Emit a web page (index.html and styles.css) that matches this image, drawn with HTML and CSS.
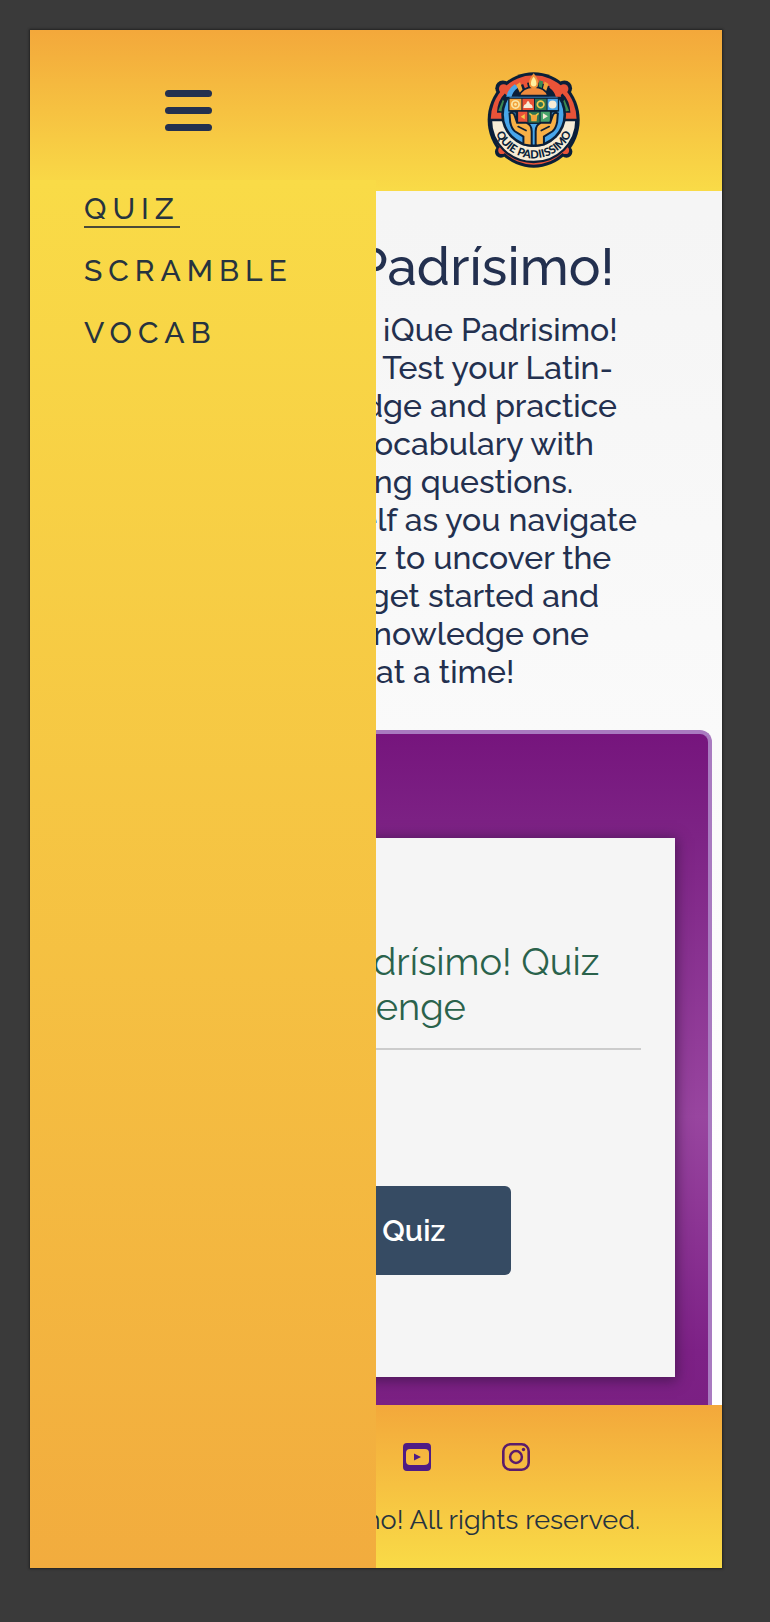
FILE: index.html
```html
<!DOCTYPE html>
<html lang="en">
<head>
<meta charset="utf-8">
<meta name="viewport" content="width=device-width, initial-scale=1">
<title>¡Qué Padrísimo!</title>
<link rel="stylesheet" href="styles.css">
</head>
<body>
<div class="page">
  <header class="header">
    <div class="header-cell">
      <button class="menu-button" type="button" aria-label="Close menu" aria-expanded="true" aria-controls="menu">
        <span class="bar"></span><span class="bar"></span><span class="bar"></span>
      </button>
    </div>
    <div class="header-cell">
      <a class="logo" href="#" aria-label="Home">
        <svg viewBox="50 62 284 296" aria-hidden="true">
          <ellipse cx="191" cy="210" rx="139" ry="144" fill="#0b1f38"/>
          <g fill="#0b1f38"><circle cx="98" cy="114" r="23"/><circle cx="284" cy="114" r="23"/><circle cx="92" cy="306" r="18"/><circle cx="290" cy="306" r="18"/></g>
          <ellipse cx="191" cy="210" rx="130" ry="135" fill="#e95338"/>
          <g fill="#e95338"><circle cx="100" cy="116" r="14"/><circle cx="282" cy="116" r="14"/><circle cx="95" cy="302" r="11"/><circle cx="287" cy="302" r="11"/></g>
          <path d="M62 210A129 127 0 0 0 320 210Z" fill="#f7ecd6" stroke="#0b1f38" stroke-width="7"/>
          <path d="M80 188Q82 150 104 130L116 142Q98 162 96 188ZM302 188Q300 150 278 130L266 142Q284 162 286 188Z" fill="#0b1f38"/>
          <path d="M84 182L98 148L104 158L96 184ZM298 182L284 148L278 158L286 184Z" fill="#3c8a52"/>
          <circle cx="191" cy="194" r="98" fill="#0b1f38"/>
          <circle cx="191" cy="194" r="90" fill="#49a6ea"/>
          <path d="M116 140A92 92 0 0 1 266 140Z" fill="#0b1f38"/>
          <path d="M108 140Q112 116 134 102L144 112Q128 124 124 140Z" fill="#49a6ea"/>
          <path d="M274 140Q270 116 248 102L238 112Q254 124 258 140Z" fill="#e95338"/>
          <path d="M138 104l12-8 8 24-9 7zM224 94l12 7-8 24-10-6z" fill="#f3a43c"/>
          <path d="M156 94l13-5 5 22-9 5z" fill="#e95338"/>
          <path d="M208 90l12 4-5 22-9-5z" fill="#3c8a52"/>
          <path d="M148 136Q156 112 191 110Q226 112 234 136Z" fill="#f08b3c" stroke="#0b1f38" stroke-width="5"/>
          <path d="M191 74Q174 96 182 108Q191 116 200 108Q208 96 191 74Z" fill="#fff0a0" stroke="#f3943b" stroke-width="6"/>
          <path d="M114 142H268V184L246 188V222H136V188L114 184Z" fill="#0b1f38"/>
          <path d="M118 146H154V180H118Z" fill="#f3a43c"/>
          <path d="M157 146H192V180H157Z" fill="#e95338"/>
          <path d="M195 146H230V180H195Z" fill="#2f7450"/>
          <path d="M233 146H264V180H233Z" fill="#49a6ea"/>
          <path d="M144 185H172V218H144Z" fill="#e95338"/>
          <path d="M175 185H209V218H175Z" fill="#2f7450"/>
          <path d="M212 185H240V218H212Z" fill="#49a36b"/>
          <circle cx="136" cy="163" r="11" fill="none" stroke="#fbe7a8" stroke-width="5"/>
          <circle cx="136" cy="163" r="4" fill="#fbe7a8"/>
          <path d="M160 174Q160 164 168 162Q174 144 180 162Q188 164 188 174Z" fill="#f7ecd6"/>
          <circle cx="212" cy="163" r="10" fill="none" stroke="#f3c94a" stroke-width="5"/>
          <circle cx="248" cy="163" r="12" fill="#f7ecd6"/>
          <path d="M164 192V208L152 200Z" fill="#f3c94a"/>
          <path d="M219 190V208L234 199Z" fill="#f7ecd6"/>
          <path d="M182 194H202L200 214H184Z" fill="#f3a43c"/>
          <path d="M178 190l8 6M206 190l-8 6" stroke="#f3c94a" stroke-width="4"/>
          <path d="M118 190Q130 184 134 198L141 218H168Q185 224 185 244V288L160 284V260L134 244Q124 236 120 216Z" fill="#f8b046" stroke="#0b1f38" stroke-width="6"/>
          <path d="M264 190Q252 184 248 198L241 218H214Q197 224 197 244V288L222 284V260L248 244Q258 236 262 216Z" fill="#f8b046" stroke="#0b1f38" stroke-width="6"/>
          <path d="M144 230L168 242M238 230L214 242" stroke="#0b1f38" stroke-width="5" stroke-linecap="round"/>
          <path id="motto" d="M67 202A124 124 0 0 0 315 202" fill="none"/>
          <text class="logo-text"><textPath href="#motto" startOffset="50%" text-anchor="middle">QUIE PADIISSIMO</textPath></text>
        </svg>
      </a>
    </div>
  </header>

  <nav class="menu" id="menu">
    <ul class="menu-list">
      <li><a class="menu-link current" href="#quiz" aria-current="page">QUIZ</a></li>
      <li><a class="menu-link" href="#scramble">SCRAMBLE</a></li>
      <li><a class="menu-link" href="#vocab">VOCAB</a></li>
    </ul>
  </nav>

  <main class="main">
    <section class="intro">
      <h1 class="title">My ¡Qué Padrísimo!</h1>
      <p class="text">Welcome to the ¡Que Padrisimo!<br>Quiz Challenge! Test your Latin-<br>Culture knowledge and practice<br>your Spanish vocabulary with<br>our challenging questions.<br>Challenge yourself as you navigate<br>through the quiz to uncover the<br>answers. Let's get started and<br>expand your knowledge one<br>question at a time!</p>
    </section>
    <section class="quiz" id="quiz">
      <div class="card">
        <h2 class="card-title">Play ¡Qué Padrísimo! Quiz Challenge</h2>
        <button class="start" type="button">Start Quiz</button>
      </div>
    </section>
  </main>

  <footer class="footer">
    <ul class="social">
      <li><a class="social-link" href="#" aria-label="Facebook"><svg viewBox="0 0 28 28"><path fill="currentColor" d="M4 0H24Q28 0 28 4V24Q28 28 24 28H19V18H23L24 14H19V11Q19 9 21 9H24V5H20Q15 5 15 10V14H11V18H15V28H4Q0 28 0 24V4Q0 0 4 0Z"/></svg></a></li>
      <li><a class="social-link" href="#" aria-label="Twitter"><svg viewBox="0 0 28 28"><path fill="none" stroke="currentColor" stroke-width="3" d="M4 4L24 24M24 4L4 24"/></svg></a></li>
      <li><a class="social-link" href="#" aria-label="YouTube"><svg viewBox="0 0 28 28"><path fill="currentColor" fill-rule="evenodd" d="M4 0H24Q28 0 28 4V24Q28 28 24 28H4Q0 28 0 24V4Q0 0 4 0ZM7 6Q3 6 3 10V18Q3 22 7 22H21Q26 22 26 18V10Q26 6 22 6ZM11 10.500L18 14L11 17.500Z"/></svg></a></li>
      <li><a class="social-link instagram" href="#" aria-label="Instagram"><svg viewBox="0 0 28 28"><rect x="1.300" y="1.300" width="25.400" height="25.400" rx="7" fill="none" stroke="currentColor" stroke-width="2.600"/><circle cx="14" cy="14" r="5.900" fill="none" stroke="currentColor" stroke-width="2.500"/><circle cx="21.500" cy="6.500" r="1.700" fill="currentColor"/></svg></a></li>
    </ul>
    <p class="copyright">© 2024 ¡Qué Padrísimo! All rights reserved.</p>
  </footer>
</div>
</body>
</html>
```
FILE: styles.css
```css
* {
  box-sizing: border-box;
}

body {
  margin: 0;
  padding: 30px 48px 54px 30px;
  background: #3a3a3a;
  color: #23304f;
  font-family: Raleway, Lato, sans-serif;
  font-weight: 500;
}

.page {
  position: relative;
  display: flex;
  flex-direction: column;
  min-height: calc(100vh - 84px);
  background: linear-gradient(#f5f5f5 12%, #ffffff 80%);
  box-shadow: 0 0 2px 1px #222222;
}

.header {
  display: grid;
  grid-template-columns: 1fr 1fr;
  align-items: center;
  height: 161px;
  background: linear-gradient(#f3a83b, #f9db47);
}

.header-cell {
  display: flex;
  justify-content: center;
  padding-right: 30px;
}

.menu-button {
  display: flex;
  flex-direction: column;
  gap: 10px;
  padding: 0;
  border: 0;
  background: none;
}

.bar {
  width: 47px;
  height: 7px;
  border-radius: 4px;
  background: #23304f;
}

.logo {
  display: block;
  width: 94px;
  margin-top: 18px;
}

.logo svg {
  display: block;
  width: 100%;
}

.logo-text {
  fill: #0b1f38;
  font: 900 34px Lato, sans-serif;
}

.menu {
  position: absolute;
  z-index: 1;
  top: 150px;
  bottom: 0;
  left: 0;
  width: 50%;
  padding: 12px 54px;
  background: linear-gradient(#f9db47, #f2ac3e);
}

.menu-list,
.social {
  margin: 0;
  padding: 0;
  list-style: none;
}

.menu-list {
  display: grid;
  gap: 26px;
}

.menu-link {
  display: block;
  width: max-content;
  border-bottom: 2px solid transparent;
  color: #26333f;
  font-size: 30px;
  line-height: 34px;
  letter-spacing: 6px;
  text-decoration: none;
}

.menu-link.current {
  border-color: #4a4a38;
}

.main {
  flex: 1;
  display: flex;
  flex-direction: column;
}

.intro {
  padding: 42px 20px 39px;
  text-align: center;
}

.title {
  margin: 0 0 12px;
  font-size: 53px;
  font-weight: 500;
  line-height: 66px;
}

.text {
  margin: 0;
  font-size: 32px;
  line-height: 38px;
  white-space: nowrap;
}

.quiz {
  flex: 1;
  margin: 0 10px;
  padding: 104px 33px 27px;
  border: 4px solid #a97bc0;
  border-bottom: 0;
  border-radius: 12px 12px 0 0;
  background: linear-gradient(#76157d, #7d2385 15%, #98459f 57%, #7d2186 92%, #7b2083);
}

.card {
  padding: 101px 34px 102px;
  background: #f5f5f5;
  box-shadow: 0 2px 12px 2px rgba(60, 20, 70, 0.7);
  text-align: center;
}

.card-title {
  margin: 0 0 136px;
  padding: 0 34px 19px;
  border-bottom: 2px solid #cccccc;
  color: #2a624b;
  font-size: 38px;
  font-weight: 400;
  line-height: 45px;
}

.start {
  width: 270px;
  height: 89px;
  border: 0;
  border-radius: 6px;
  background: #364b63;
  color: #ffffff;
  font: 600 30px Raleway, Lato, sans-serif;
}

.footer {
  height: 163px;
  padding-top: 38px;
  background: linear-gradient(#f3a83b, #f9db47);
  text-align: center;
}

.social {
  display: flex;
  justify-content: center;
  gap: 71px;
  padding-right: 17px;
}

.social-link {
  display: block;
  width: 28px;
  height: 28px;
  color: #4f1c85;
}

.social-link.instagram {
  color: #5b1c6b;
}

.social-link svg {
  display: block;
}

.copyright {
  margin: 32px 0 0;
  color: #26333f;
  font-size: 27px;
  font-weight: 400;
  line-height: 34px;
}
```
